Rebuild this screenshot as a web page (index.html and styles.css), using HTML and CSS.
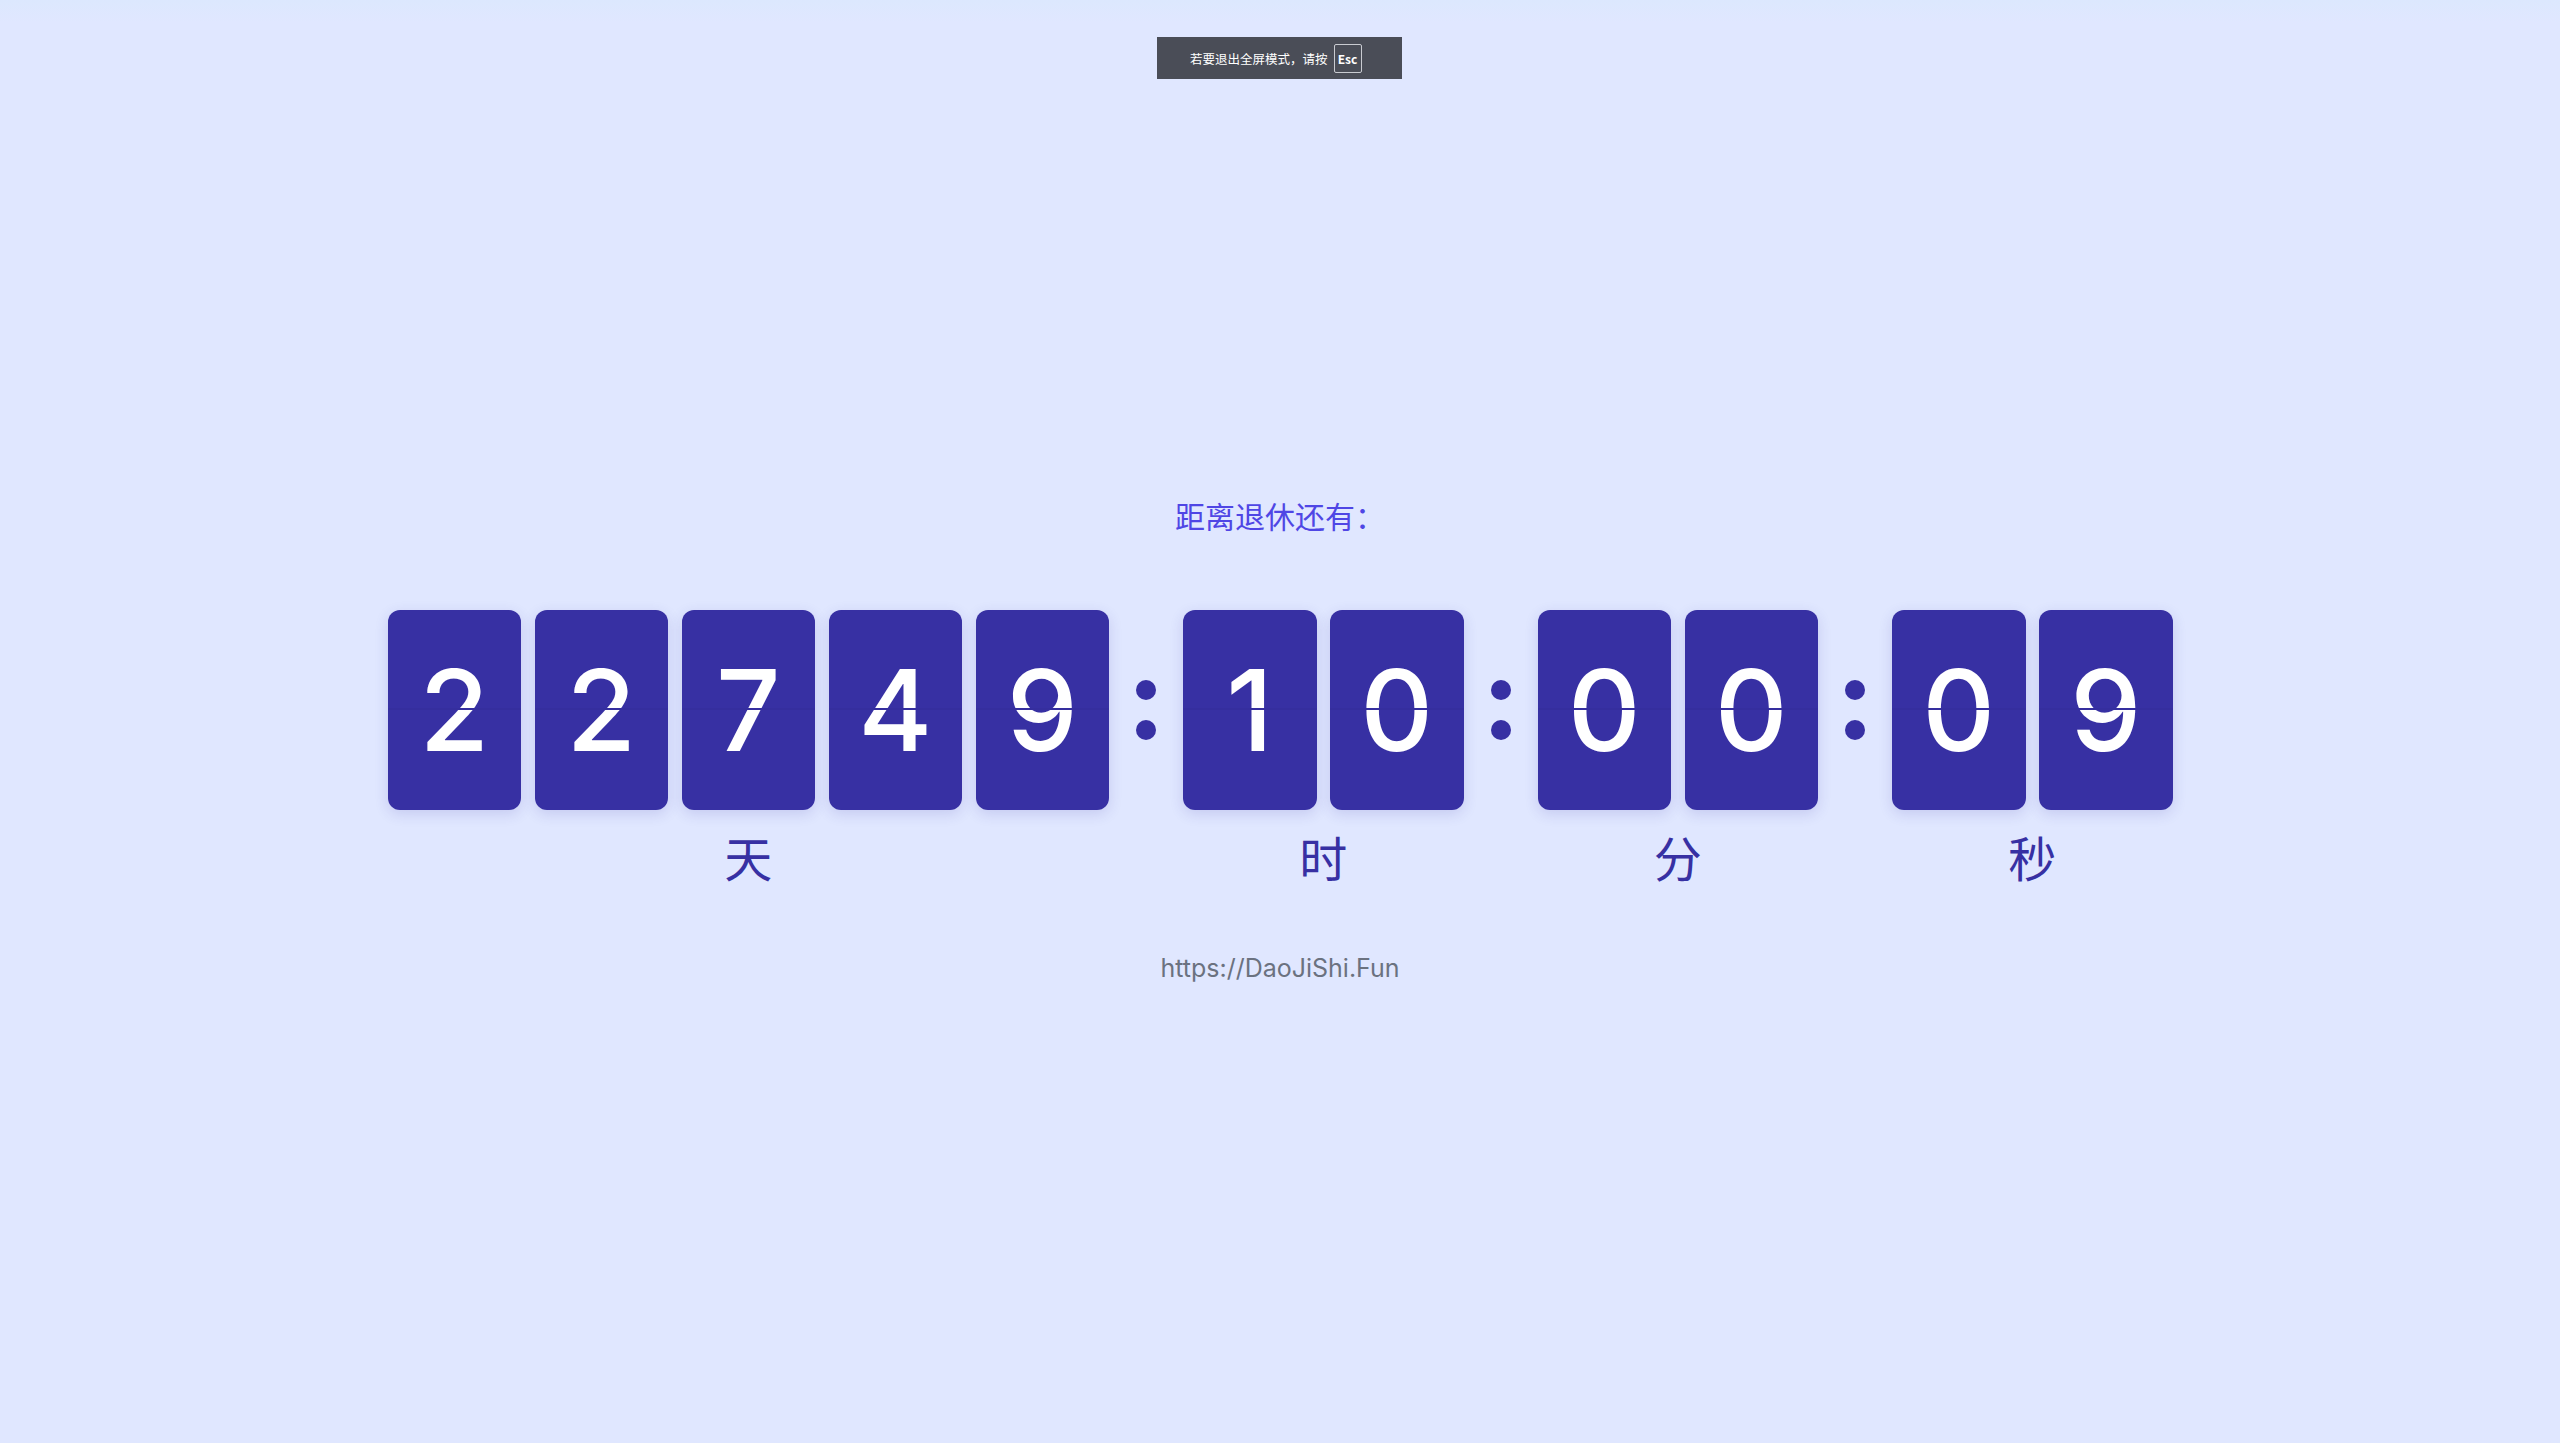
FILE: index.html
```html
<!DOCTYPE html>
<html lang="zh-CN">
<head>
    <meta charset="UTF-8">
    <meta name="viewport" content="width=device-width, initial-scale=1.0">
    <title>退休倒计时</title>
    <link rel="stylesheet" href="styles.css">
</head>
<body>
    <div class="notice">若要退出全屏模式，请按<span class="key">Esc</span></div>
    <main class="page">
        <h1 class="title">距离退休还有：</h1>
        <div class="clock">
            <div class="unit">
                <div class="digits">
                    <div class="card">2</div>
                    <div class="card">2</div>
                    <div class="card">7</div>
                    <div class="card">4</div>
                    <div class="card">9</div>
                </div>
                <div class="label">天</div>
            </div>
            <div class="colon"><span></span><span></span></div>
            <div class="unit">
                <div class="digits">
                    <div class="card">1</div>
                    <div class="card">0</div>
                </div>
                <div class="label">时</div>
            </div>
            <div class="colon"><span></span><span></span></div>
            <div class="unit">
                <div class="digits">
                    <div class="card">0</div>
                    <div class="card">0</div>
                </div>
                <div class="label">分</div>
            </div>
            <div class="colon"><span></span><span></span></div>
            <div class="unit">
                <div class="digits">
                    <div class="card">0</div>
                    <div class="card">9</div>
                </div>
                <div class="label">秒</div>
            </div>
        </div>
        <p class="site">https://DaoJiShi.Fun</p>
    </main>
</body>
</html>
```

FILE: styles.css
```css
body {
    margin: 0;
    min-height: 100vh;
    font-family: Inter, "Noto Sans CJK SC", sans-serif;
    background: linear-gradient(#dce8fe 0, #e0e7ff 22px) #e0e7ff;
}
.notice {
    position: fixed;
    top: 37px;
    left: 1157px;
    width: 245px;
    height: 42px;
    box-sizing: border-box;
    padding-left: 33px;
    display: flex;
    align-items: center;
    gap: 6px;
    background-color: #4a4d57;
    color: #fff;
    font-family: "Noto Sans CJK SC", sans-serif;
    font-size: 12.5px;
}
.key {
    display: flex;
    align-items: center;
    justify-content: center;
    width: 28px;
    height: 29px;
    box-sizing: border-box;
    border: 1px solid #c9cbd1;
    border-radius: 2px;
    font-size: 12px;
    font-weight: 700;
}
.page {
    display: flex;
    flex-direction: column;
    align-items: center;
    padding-top: 497px;
}
.title {
    margin: 0;
    font-family: "Noto Sans CJK SC", sans-serif;
    font-size: 30px;
    line-height: 36px;
    font-weight: 400;
    color: #4f46e5;
}
.clock {
    display: flex;
    align-items: flex-start;
    gap: 27px;
    margin-top: 77px;
}
.unit {
    display: flex;
    flex-direction: column;
    align-items: center;
}
.digits {
    display: flex;
    gap: 13.5px;
}
.card {
    position: relative;
    width: 133.5px;
    height: 200px;
    display: flex;
    align-items: center;
    justify-content: center;
    background-color: #3730a3;
    border-radius: 12px;
    box-shadow: 0 4px 14px rgba(55, 48, 163, 0.16);
    color: #fff;
    font-size: 113px;
    font-weight: 500;
    line-height: 1;
}
/* flip split line */
.card::after {
    content: "";
    position: absolute;
    left: 0;
    right: 0;
    top: 98px;
    height: 2px;
    background-color: #352e9e;
}
.label {
    margin-top: 22px;
    font-family: "Noto Sans CJK SC", sans-serif;
    font-size: 48px;
    line-height: 1;
    color: #3730a3;
}
.colon {
    height: 200px;
    width: 20px;
    display: flex;
    flex-direction: column;
    justify-content: center;
    gap: 20px;
}
.colon span {
    width: 20px;
    height: 20px;
    border-radius: 50%;
    background-color: #3730a3;
}
.site {
    margin: 70px 0 0;
    font-size: 25px;
    line-height: 37px;
    color: #6b7280;
}
```
